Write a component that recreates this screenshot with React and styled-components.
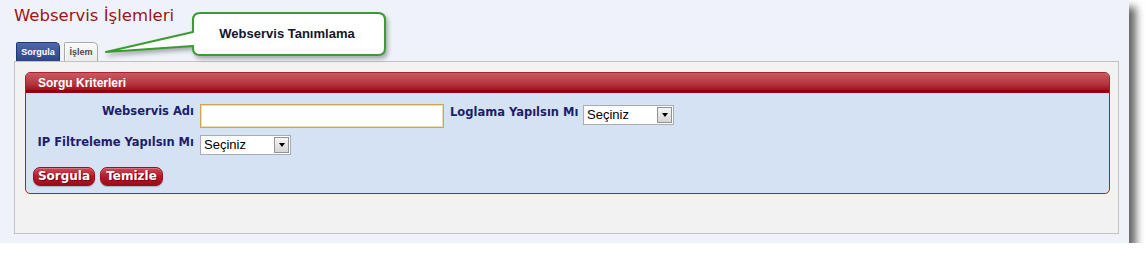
import React from "react";
import styled, { createGlobalStyle } from "styled-components";

const Global = createGlobalStyle`
  html, body { margin: 0; padding: 0; background: #ffffff; }
  body { font-family: "DejaVu Sans", Verdana, sans-serif; }
  * { box-sizing: border-box; }
`;

const Window = styled.div`
  width: 1129px;
  height: 243px;
  background: #eff3f9;
  padding: 0 10px 9px 14px;
  box-shadow: 7px 7px 8px rgba(0, 0, 0, 0.6);
  display: flex;
  flex-direction: column;
`;

const Title = styled.h1`
  margin: 0;
  padding-top: 6px;
  height: 42px;
  font-family: "DejaVu Sans", Verdana, sans-serif;
  font-weight: normal;
  font-size: 16.5px;
  line-height: 20px;
  color: #9c1420;
`;

const TabRow = styled.div`
  position: relative;
  display: flex;
  gap: 4px;
  height: 19px;
  padding-left: 2px;
`;

const Tab = styled.div`
  height: 19px;
  width: ${(p) => p.$w}px;
  display: flex;
  align-items: center;
  justify-content: center;
  font-family: "Liberation Sans", Arial, sans-serif;
  font-weight: bold;
  font-size: 9px;
  border-radius: 2px 5px 0 0;
  border: 1px solid ${(p) => (p.$active ? "#1f3773" : "#a9a9a9")};
  border-bottom: none;
  color: ${(p) => (p.$active ? "#ffffff" : "#4a4a4a")};
  background: ${(p) =>
    p.$active
      ? "linear-gradient(#5068ab, #2d4687)"
      : "linear-gradient(#fafafa, #ebebeb)"};
  box-shadow: ${(p) => (p.$active ? "none" : "inset 1px 1px 0 #ffffff")};
`;

const CalloutWrap = styled.div`
  position: absolute;
  left: 86px;
  top: -34px;
  width: 292px;
  height: 54px;
  padding: 5px 0 0 93px;
  z-index: 2;
`;

const CalloutShape = styled.svg`
  position: absolute;
  left: 0;
  top: 0;
  overflow: visible;
  filter: drop-shadow(2px 3px 2px rgba(0, 0, 0, 0.3));
`;

const CalloutText = styled.div`
  position: relative;
  width: 192px;
  height: 42px;
  display: flex;
  align-items: center;
  justify-content: center;
  font-family: "Liberation Sans", Arial, sans-serif;
  font-weight: bold;
  font-size: 13px;
  color: #15152a;
  padding-right: 4px;
`;

const Panel = styled.div`
  height: 174px;
  background: #f2f2f2;
  border: 1px solid #c2c2c2;
  padding: 10px 8px 0 10px;
`;

const Fieldset = styled.div`
  border: 1px solid #b31d2c;
  border-radius: 5px;
  overflow: hidden;
  background: #d5e2f3;
`;

const Legend = styled.div`
  height: 20px;
  padding-left: 12px;
  display: flex;
  align-items: center;
  font-family: "Liberation Sans", Arial, sans-serif;
  font-weight: bold;
  font-size: 12px;
  color: #ffffff;
  background: linear-gradient(#c75a62, #b53540 55%, #a60e1c 85%, #950010 86%, #950010);
`;

const Body = styled.div`
  padding: 11px 0 7px 7px;
`;

const FormGrid = styled.div`
  display: grid;
  grid-template-columns: 161px 244px 127px 91px;
  column-gap: 6px;
  row-gap: 7px;
  align-items: start;
`;

const Label = styled.label`
  display: block;
  padding-top: ${(p) => p.$top || 1}px;
  font-family: "DejaVu Sans", Verdana, sans-serif;
  font-weight: bold;
  font-size: 11.5px;
  line-height: 13px;
  color: #1d1d6a;
  white-space: nowrap;
  text-align: ${(p) => (p.$right ? "right" : "left")};
`;

const TextInput = styled.input`
  display: block;
  width: 244px;
  height: 24px;
  margin: 0;
  border: 1px solid #cfa658;
  box-shadow: inset 0 0 0 1px #efdcab;
  background: #ffffff;
  outline: none;
`;

const SelectBox = styled.div`
  display: flex;
  align-items: center;
  width: 91px;
  height: 20px;
  margin-top: ${(p) => p.$mt || 0}px;
  border: 1px solid #a6adb4;
  background: #ffffff;
  padding-right: 1px;
`;

const SelectValue = styled.span`
  flex: 1;
  padding-left: 3px;
  font-family: "Liberation Sans", Arial, sans-serif;
  font-size: 13px;
  line-height: 18px;
  color: #000000;
`;

const ArrowBox = styled.span`
  width: 15px;
  height: 16px;
  display: flex;
  align-items: center;
  justify-content: center;
  border: 1px solid #8f9396;
  background: linear-gradient(#f6f6f6, #d6d6d6);
  &::after {
    content: "";
    border-left: 3.5px solid transparent;
    border-right: 3.5px solid transparent;
    border-top: 4px solid #000000;
    margin-top: 1px;
  }
`;

const ButtonRow = styled.div`
  display: flex;
  gap: 5px;
  margin-top: 12px;
`;

const Button = styled.button`
  height: 19px;
  width: ${(p) => p.$w}px;
  padding: 0;
  border: 1px solid #9c0e1e;
  border-radius: 7px;
  background: linear-gradient(#d04656, #b41a2c 50%, #a00a1c);
  box-shadow: inset 0 1px 0 rgba(255, 255, 255, 0.25), 0 1px 1px rgba(0, 0, 0, 0.2);
  font-family: "DejaVu Sans", Verdana, sans-serif;
  font-weight: bold;
  font-size: 12px;
  line-height: 16px;
  color: #ffffff;
  text-shadow: 1px 1px 0 #7a0010;
`;

function Select({ mt }) {
  return (
    <SelectBox $mt={mt}>
      <SelectValue>Seçiniz</SelectValue>
      <ArrowBox />
    </SelectBox>
  );
}

export default function App() {
  return (
    <>
      <Global />
      <Window>
        <Title>Webservis İşlemleri</Title>
        <TabRow>
          <Tab $active $w={44}>Sorgula</Tab>
          <Tab $w={34}>İşlem</Tab>
          <CalloutWrap>
            <CalloutShape width="292" height="54" viewBox="0 0 292 54">
              <path
                d="M100 5 H278 Q285 5 285 12 V40 Q285 47 278 47 H100 Q93 47 93 40 V38 L6 44 L93 24 V12 Q93 5 100 5 Z"
                fill="#ffffff"
                stroke="#3b9a33"
                strokeWidth="2"
                strokeLinejoin="round"
              />
            </CalloutShape>
            <CalloutText>Webservis Tanımlama</CalloutText>
          </CalloutWrap>
        </TabRow>
        <Panel>
          <Fieldset>
            <Legend>Sorgu Kriterleri</Legend>
            <Body>
              <FormGrid>
                <Label $right>Webservis Adı</Label>
                <TextInput type="text" />
                <Label $top={2}>Loglama Yapılsın Mı</Label>
                <Select mt={1} />
                <Label $right>IP Filtreleme Yapılsın Mı</Label>
                <Select />
              </FormGrid>
              <ButtonRow>
                <Button $w={62}>Sorgula</Button>
                <Button $w={63}>Temizle</Button>
              </ButtonRow>
            </Body>
          </Fieldset>
        </Panel>
      </Window>
    </>
  );
}
